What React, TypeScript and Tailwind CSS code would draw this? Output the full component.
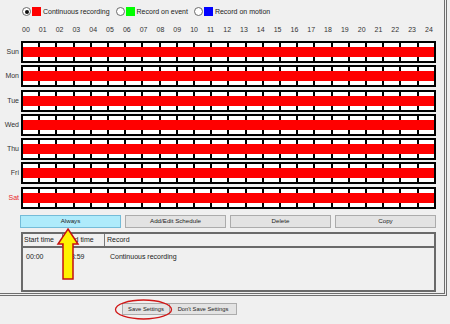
import React from 'react'

const hours = Array.from({ length: 25 }, (_, i) => String(i).padStart(2, '0'))
const days = ['Sun', 'Mon', 'Tue', 'Wed', 'Thu', 'Fri', 'Sat']
const cells = Array.from({ length: 24 }, (_, i) => i)

function Radio({ checked }: { checked?: boolean }) {
  return (
    <span className="w-[9px] h-[9px] rounded-full border border-[#6a6a6a] bg-white flex items-center justify-center">
      {checked && <span className="w-[4px] h-[4px] rounded-full bg-[#111]" />}
    </span>
  )
}

function Legend({ checked, color, label }: { checked?: boolean; color: string; label: string }) {
  return (
    <div className="flex items-center">
      <Radio checked={checked} />
      <span className={`ml-[1px] w-[9px] h-[9px] ${color}`} />
      <span className="ml-[2px]">{label}</span>
    </div>
  )
}

function DayRow({ day }: { day: string }) {
  return (
    <div className="flex items-center h-[22px]">
      <div className={`w-[19px] text-right ${day === 'Sat' ? 'text-[#e8262a]' : 'text-[#333]'}`}>{day}</div>
      <div className="relative ml-[2px] w-[415px] h-[22px] border-2 border-black flex">
        {cells.map((i) => (
          <div key={i} className={`flex-1 bg-white ${i > 0 ? 'border-l-2 border-black' : ''}`} />
        ))}
        {/* recording bar */}
        <div className="absolute left-0 right-0 top-[4px] h-[10px] bg-[#ff0000]" />
      </div>
    </div>
  )
}

function Btn({ children, active }: { children: React.ReactNode; active?: boolean }) {
  return (
    <div
      className={`flex-1 h-[13px] flex items-center justify-center border text-[6.2px] text-[#222] ${
        active ? 'bg-[#aeebfb] border-[#74bcd8]' : 'bg-[#e3e3e3] border-[#acacac]'
      }`}
    >
      {children}
    </div>
  )
}

export default function App() {
  return (
    <div className="relative w-[450px] h-[324px] overflow-hidden bg-[#f0f0f0] text-[7px] leading-[8px] text-[#222] font-['Liberation_Sans',Arial,sans-serif]">
      {/* main panel */}
      <div className="w-[447px] h-[296px] border-r-[3px] border-b-[3px] border-double border-[#6f6f6f] pt-[7px]">
        <div className="flex items-center gap-[6px] ml-[22px] h-[9px]">
          <Legend checked color="bg-[#ff0000]" label="Continuous recording" />
          <Legend color="bg-[#00ff00]" label="Record on event" />
          <Legend color="bg-[#0000ff]" label="Record on motion" />
        </div>

        <div className="flex justify-between ml-[22px] w-[411px] mt-[10px] h-[8px] text-[#333]">
          {hours.map((h) => (
            <span key={h}>{h}</span>
          ))}
        </div>

        <div className="flex flex-col gap-[2.3px] mt-[7px]">
          {days.map((d) => (
            <DayRow key={d} day={d} />
          ))}
        </div>

        <div className="flex gap-[4px] ml-[20px] w-[416px] mt-[6px]">
          <Btn active>Always</Btn>
          <Btn>Add/Edit Schedule</Btn>
          <Btn>Delete</Btn>
          <Btn>Copy</Btn>
        </div>

        <div className="ml-[21px] w-[415px] h-[60px] mt-[4px] border-2 border-[#6a6a6a] flex flex-col">
          <div className="flex h-[14px] border-b-2 border-[#6a6a6a]">
            <div className="w-[40px] border-r border-[#7a7a7a] pl-[1px] flex items-center">Start time</div>
            <div className="w-[42px] border-r border-[#7a7a7a] pl-[3px] flex items-center">End time</div>
            <div className="flex-1 pl-[2px] flex items-center">Record</div>
          </div>
          <div className="flex pt-[5px]">
            <div className="w-[40px] pl-[3px]">00:00</div>
            <div className="w-[42px] pl-[4px]">23:59</div>
            <div className="flex-1 pl-[5px]">Continuous recording</div>
          </div>
        </div>
      </div>

      <div className="flex ml-[122px] mt-[7px]">
        <div className="w-[48px] h-[12px] flex items-center justify-center bg-[#e3e3e3] border border-[#acacac] text-[5.8px]">
          Save Settings
        </div>
        <div className="w-[67px] h-[12px] flex items-center justify-center bg-[#e3e3e3] border border-[#acacac] border-l-0 text-[5.8px]">
          Don't Save Settings
        </div>
      </div>

      {/* annotations */}
      <svg className="absolute left-0 top-0 pointer-events-none" width="450" height="324" viewBox="0 0 450 324">
        <polygon
          points="68,229 78,244 73,244 73,279 63,279 63,244 58,244"
          fill="#fff200"
          stroke="#c41010"
          strokeWidth="1.5"
          strokeLinejoin="miter"
        />
        <ellipse cx="143.5" cy="309.5" rx="28" ry="9.5" fill="none" stroke="#d01818" strokeWidth="1.3" />
      </svg>
    </div>
  )
}
